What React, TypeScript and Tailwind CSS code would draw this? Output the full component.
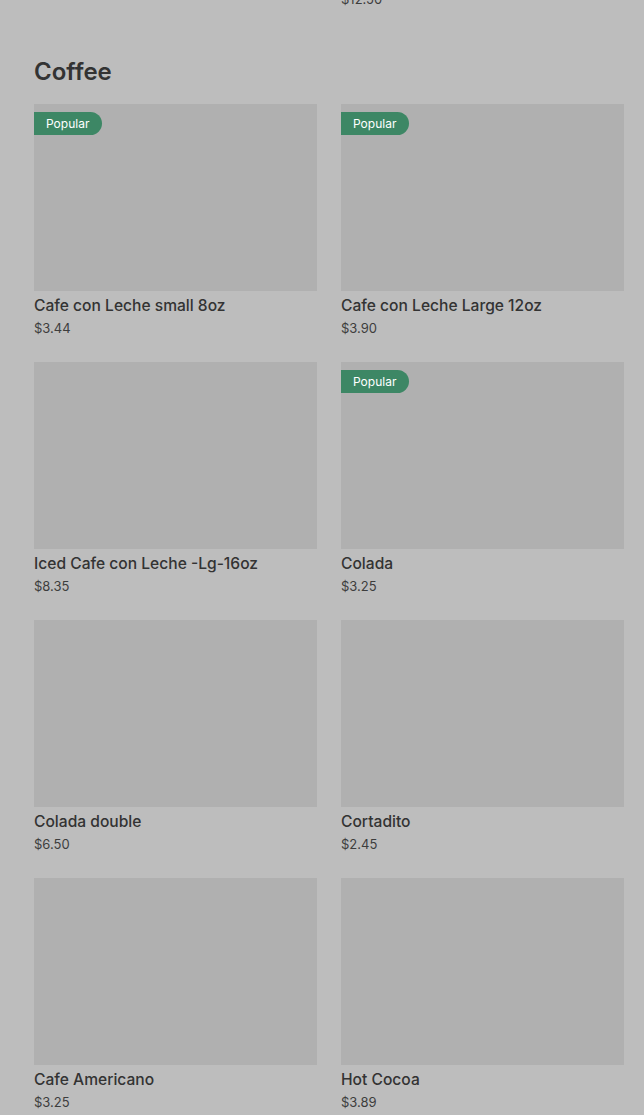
const items = [
  { name: 'Cafe con Leche small 8oz', price: '$3.44', popular: true },
  { name: 'Cafe con Leche Large 12oz', price: '$3.90', popular: true },
  { name: 'Iced Cafe con Leche -Lg-16oz', price: '$8.35', popular: false },
  { name: 'Colada', price: '$3.25', popular: true },
  { name: 'Colada double', price: '$6.50', popular: false },
  { name: 'Cortadito', price: '$2.45', popular: false },
  { name: 'Cafe Americano', price: '$3.25', popular: false },
  { name: 'Hot Cocoa', price: '$3.89', popular: false },
]

function ItemCard({ name, price, popular }: { name: string; price: string; popular: boolean }) {
  return (
    <div className="flex flex-col">
      <div className="relative h-[187px] bg-[#b0b0b0]">
        {popular && (
          <span className="absolute left-0 top-2 h-[23px] flex items-center pl-3 pr-[13px] rounded-r-full bg-[#3d8765] text-white text-[12px]">
            Popular
          </span>
        )}
      </div>
      <div className="mt-[5px] text-[15.6px] leading-5 font-medium text-[#333]">{name}</div>
      <div className="mt-[3px] text-[13px] leading-[18px] text-[#3d3d3d]">{price}</div>
    </div>
  )
}

export default function App() {
  return (
    <div className="w-full h-[1115px] overflow-hidden bg-[#bdbdbd] font-['Inter',sans-serif] pl-[34px] pr-[20px]">
      <div className="grid grid-cols-2 gap-x-6 -mt-[10px]">
        <div />
        <div className="text-[13px] leading-[18px] text-[#3d3d3d]">$12.50</div>
      </div>
      <h2 className="mt-[50px] mb-[18px] text-[24px] leading-7 font-semibold text-[#333]">Coffee</h2>
      <div className="grid grid-cols-2 gap-x-6 gap-y-[25px]">
        {items.map((item) => (
          <ItemCard key={item.name} {...item} />
        ))}
      </div>
    </div>
  )
}
